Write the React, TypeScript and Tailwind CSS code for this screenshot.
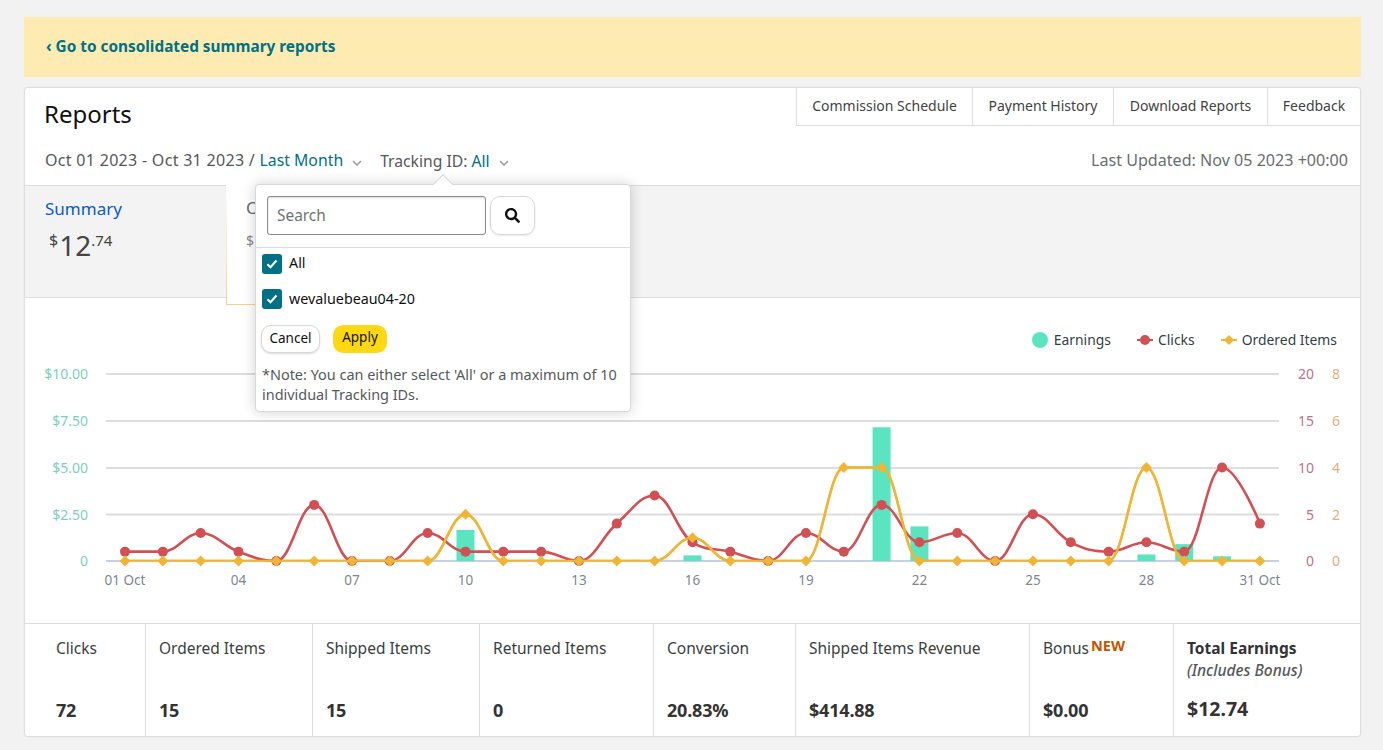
import { FaSearch } from "react-icons/fa";

const clicks = [1,1,3,1,0,6,0,0,3,1,1,1,0,4,7,2,1,0,3,1,6,2,3,0,5,2,1,2,1,10,4];
const ordered = [0,0,0,0,0,0,0,0,0,2,0,0,0,0,0,1,0,0,0,4,4,0,0,0,0,0,0,4,0,0,0];
const earnings: [number, number][] = [[10,1.66],[16,0.3],[21,7.15],[22,1.85],[28,0.35],[29,0.9],[30,0.25]];
const X = (d: number) => 125 + (d - 1) * 37.83;
const BASE = 561;
const H = 187;

function spline(pts: [number, number][]) {
  const sm = 1.5;
  const den = sm + 1;
  const conts = pts.map((p, i) => {
    const last = pts[i - 1];
    const next = pts[i + 1];
    if (!last || !next) return { l: p, r: p };
    const [x, y] = p;
    const lx = (sm * x + last[0]) / den;
    let ly = (sm * y + last[1]) / den;
    const rx = (sm * x + next[0]) / den;
    let ry = (sm * y + next[1]) / den;
    const c = ((ry - ly) * (rx - x)) / (rx - lx) + y - ry;
    ly += c;
    ry += c;
    if (ly > y && ly > last[1]) {
      ly = Math.max(last[1], y);
      ry = 2 * y - ly;
    } else if (ly < y && ly < last[1]) {
      ly = Math.min(last[1], y);
      ry = 2 * y - ly;
    }
    if (ry > y && ry > next[1]) {
      ry = Math.max(next[1], y);
      ly = 2 * y - ry;
    } else if (ry < y && ry < next[1]) {
      ry = Math.min(next[1], y);
      ly = 2 * y - ry;
    }
    return { l: [lx, ly] as [number, number], r: [rx, ry] as [number, number] };
  });
  let d = `M${pts[0][0]} ${pts[0][1]}`;
  for (let i = 1; i < pts.length; i++) {
    d += ` C${conts[i - 1].r[0]} ${conts[i - 1].r[1]} ${conts[i].l[0]} ${conts[i].l[1]} ${pts[i][0]} ${pts[i][1]}`;
  }
  return d;
}

const clickPts = clicks.map((v, i) => [X(i + 1), BASE - (v / 20) * H] as [number, number]);
const orderPts = ordered.map((v, i) => [X(i + 1), BASE - (v / 8) * H] as [number, number]);

function Chart() {
  const ticks = [
    { y: 374, l: "$10.00", a: "20", b: "8" },
    { y: 421, l: "$7.50", a: "15", b: "6" },
    { y: 468, l: "$5.00", a: "10", b: "4" },
    { y: 514.5, l: "$2.50", a: "5", b: "2" },
    { y: 561, l: "0", a: "0", b: "0" },
  ];
  const xs = [[1,"01 Oct"],[4,"04"],[7,"07"],[10,"10"],[13,"13"],[16,"16"],[19,"19"],[22,"22"],[25,"25"],[28,"28"],[31,"31 Oct"]] as [number,string][];
  return (
    <svg viewBox="25 360 1335 240" width={1335} height={240} className="block" style={{ fontFamily: "'Noto Sans', sans-serif", fontSize: 13.5 }}>
      <defs>
        <clipPath id="plot"><rect x={100} y={360} width={1185} height={201.5} /></clipPath>
      </defs>
      {ticks.map((t) => (
        <g key={t.y}>
          <line x1={106} x2={1279} y1={t.y} y2={t.y} stroke={t.y === 561 ? "#c6d2e4" : "#dddddd"} strokeWidth={2} />
          <text x={88} y={t.y + 5} textAnchor="end" fill="#7ccfc0" fontSize={14}>{t.l}</text>
          <text x={1314} y={t.y + 5} textAnchor="end" fill="#c2708a" fontSize={14}>{t.a}</text>
          <text x={1340} y={t.y + 5} textAnchor="end" fill="#dfb084" fontSize={14}>{t.b}</text>
        </g>
      ))}
      {earnings.map(([d, v]) => {
        const h = (v / 10) * H;
        return <rect key={d} x={X(d) - 9} y={BASE - h} width={18} height={h} fill="#5ae4c0" />;
      })}
      <path d={spline(orderPts)} fill="none" stroke="#f0b535" strokeWidth={2.4} clipPath="url(#plot)" />
      <path d={spline(clickPts)} fill="none" stroke="#d15054" strokeWidth={2.6} clipPath="url(#plot)" />
      {clickPts.map(([x, y], i) => <circle key={i} cx={x} cy={y} r={5} fill="#d15054" />)}
      <path d={spline(orderPts)} fill="none" stroke="#f0b535" strokeWidth={2.4} clipPath="url(#plot)" />
      {orderPts.map(([x, y], i) => (
        <path key={i} d={`M${x} ${y - 5.4}L${x + 5.4} ${y}L${x} ${y + 5.4}L${x - 5.4} ${y}Z`} fill="#f0b535" />
      ))}
      {xs.map(([d, l]) => (
        <text key={d} x={d === 31 ? 1260 : X(d)} y={585} textAnchor="middle" fill="#7d8790">{l}</text>
      ))}
    </svg>
  );
}

function Chevron() {
  return (
    <svg width="10" height="6" viewBox="0 0 10 6" className="inline-block ml-[9px] mt-[5px]">
      <path d="M1 1l4 4 4-4" fill="none" stroke="#9a9fa3" strokeWidth="1.6" />
    </svg>
  );
}

function Check({ label }: { label: string }) {
  return (
    <div className="flex items-center h-[35.5px] pl-[6px] gap-[7px] text-[14.3px] text-[#0f1111]">
      <span className="w-[20px] h-[20px] rounded-[3px] bg-[#007185] flex items-center justify-center">
        <svg width="12" height="10" viewBox="0 0 12 10">
          <path d="M1.5 5.2l3 3 6-6.6" fill="none" stroke="#fff" strokeWidth="2.2" />
        </svg>
      </span>
      <span className="relative -top-[1px]">{label}</span>
    </div>
  );
}

function Stat({ label, value, first }: { label: React.ReactNode; value: string; first?: boolean }) {
  return (
    <div className={`border-r border-[#dddddd] flex flex-col ${first ? "pl-[31px]" : "pl-[13px]"} pt-[12px]`}>
      <div className="h-[48px] leading-[24px] text-[15.5px] text-[#3a3f3f]">{label}</div>
      <div className="mt-[14px] leading-[24px] font-bold text-[18px] tracking-[-0.2px] text-[#333]">{value}</div>
    </div>
  );
}

export default function App() {
  return (
    <div className="h-[750px] overflow-hidden bg-[#f2f2f2] pl-6 pr-[22px] pt-[17px] text-[#565959]" style={{ fontFamily: "'Noto Sans', sans-serif" }}>
      <div className="h-[60px] bg-[#feebb2] flex items-center pl-[22px] font-bold text-[15.35px] text-[#007185]">‹ Go to consolidated summary reports</div>
      <div className="relative mt-[11px] mx-px bg-white shadow-[0_0_2px_rgba(0,0,0,0.3)] rounded-[2px]">
        <div className="flex justify-between h-[54px]">
          <div className="pl-[19px] pt-[10px] text-[24px] leading-[32px] text-[#0f1111]">Reports</div>
          <div className="flex h-[38px] text-[#3f4444] text-[14px]">
            <div className="w-[176px] pb-[2px] border-l border-b border-[#dddddd] flex items-center justify-center">Commission Schedule</div>
            <div className="w-[141px] pb-[2px] border-l border-b border-[#dddddd] flex items-center justify-center">Payment History</div>
            <div className="w-[154px] pb-[2px] border-l border-b border-[#dddddd] flex items-center justify-center">Download Reports</div>
            <div className="w-[93px] pb-[2px] border-l border-b border-[#dddddd] flex items-center justify-center">Feedback</div>
          </div>
        </div>
        <div className="flex items-center justify-between h-[36px] pl-[20px] pr-[12px] text-[16px]">
          <div className="flex items-center">
            <span><span className="tracking-[0.3px]">Oct 01 2023 - Oct 31 2023 / </span><span className="text-[15.8px] text-[#007185]">Last Month</span></span>
            <Chevron />
            <span className="ml-[18px] text-[15.7px] leading-[26px] pt-px">Tracking ID: <span className="text-[#007185]">All</span></span>
            <Chevron />
          </div>
          <div className="text-[16.1px] text-[#6a6e6e]">Last Updated: Nov 05 2023 +00:00</div>
        </div>
        <div className="mt-[7px] flex h-[113px] bg-[#f3f3f3] border-y border-[#dddddd]">
          <div className="w-[201px] pl-[20px] pt-[11px]">
            <div className="text-[17px] leading-[24px] text-[#0a5cc2]">Summary</div>
            <div className="mt-[8px] ml-[4px] flex items-start text-[#444]">
              <span className="text-[16px] leading-[22px]">$</span>
              <span className="text-[28px] leading-[32px] ml-px">12</span>
              <span className="text-[15px] leading-[22px]">.74</span>
            </div>
          </div>
          <div className="relative h-[120px] w-[300px] -mt-px bg-white border-b border-[#f7d08a] pl-[20px] pt-[11px]">
            <div className="absolute left-0 top-0 bottom-0 w-px bg-linear-to-b from-white to-[#f7d08a]" />
            <div className="text-[17px] leading-[24px] text-[#6a6e6e]">C</div>
            <div className="mt-[10px] text-[14px] text-[#888]">$</div>
          </div>
        </div>
        <div className="h-[325px]">
          <div className="flex justify-end items-center gap-[26px] pt-[22px] pr-[23px] h-[62px] text-[13.9px] text-[#333f48]">
            <div className="flex items-center gap-[6px]"><span className="w-[16px] h-[16px] rounded-full bg-[#5ae4c0]" />Earnings</div>
            <div className="flex items-center gap-[5px]">
              <svg width="16" height="12" viewBox="0 0 16 12"><path d="M0 6h16" stroke="#d15054" strokeWidth="2" /><circle cx="8" cy="6" r="5" fill="#d15054" /></svg>Clicks</div>
            <div className="flex items-center gap-[5px]">
              <svg width="16" height="12" viewBox="0 0 16 12"><path d="M0 6h16" stroke="#f0b535" strokeWidth="2" /><path d="M8 1L13 6 8 11 3 6z" fill="#f0b535" /></svg>Ordered Items</div>
          </div>
          <Chart />
        </div>
        <div className="grid grid-cols-[121px_167px_167px_174px_142px_234px_144px_1fr] h-[113px] border-t border-[#dddddd]">
          <Stat first label="Clicks" value="72" />
          <Stat label="Ordered Items" value="15" />
          <Stat label="Shipped Items" value="15" />
          <Stat label="Returned Items" value="0" />
          <Stat label="Conversion" value="20.83%" />
          <Stat label="Shipped Items Revenue" value="$414.88" />
          <Stat label={<>Bonus <span className="relative -top-[3px] -ml-[2px] text-[14.5px] font-bold text-[#c45500]">NEW</span></>} value="$0.00" />
          <div className="pl-[13px] pt-[12px]">
            <div className="leading-[24px] text-[15.5px] font-bold text-[#333]">Total Earnings</div>
            <div className="leading-[20px] text-[15.5px] italic text-[#565959] font-medium">(Includes Bonus)</div>
            <div className="mt-[15px] text-[19.5px] leading-[28px] font-bold text-[#333]">$12.74</div>
          </div>
        </div>

        <div className="absolute left-[230px] top-[96px] w-[376px] h-[228px] bg-white rounded-[4px] border border-[#d5d9d9] shadow-[0_0_14px_rgba(0,0,0,0.18)]">
          <div className="absolute left-[180px] -top-[8px] w-[14px] h-[14px] rotate-45 bg-white border-l border-t border-[#d5d9d9]" />
          <div className="relative h-[63px] border-b border-[#dddddd] flex items-start pl-[11px] pt-[11px] gap-[4px]">
            <div className="w-[219px] h-[39px] rounded-[3px] border border-[#888c8c] shadow-[inset_0_1px_2px_rgba(15,17,17,0.15)] flex items-center pl-[9px] text-[15.4px] text-[#6f7373]">Search</div>
            <div className="w-[45px] h-[39px] rounded-[10px] border border-[#d5d9d9] flex items-center justify-center text-[#0f1111] shadow-[0_1px_2px_rgba(15,17,17,0.1)]"><FaSearch size={15} /></div>
          </div>
          <div className="-mt-[2px]">
            <Check label="All" />
            <Check label="wevaluebeau04-20" />
          </div>
          <div className="flex gap-[13px] pl-[5px] mt-[8px] text-[13.5px]">
            <div className="w-[59px] h-[28px] pb-[1px] rounded-[10px] border border-[#d5d9d9] bg-white text-[#0f1111] flex items-center justify-center shadow-[0_1px_2px_rgba(15,17,17,0.15)]">Cancel</div>
            <div className="w-[54px] h-[28px] pb-[3px] rounded-[10px] bg-[#ffd814] text-[#0f1111] flex items-center justify-center">Apply</div>
          </div>
          <div className="pl-[6px] pr-[4px] mt-[12px] text-[14.45px] leading-[20px] text-[#565959]">*Note: You can either select 'All' or a maximum of 10 individual Tracking IDs.</div>
        </div>
      </div>
    </div>
  );
}
